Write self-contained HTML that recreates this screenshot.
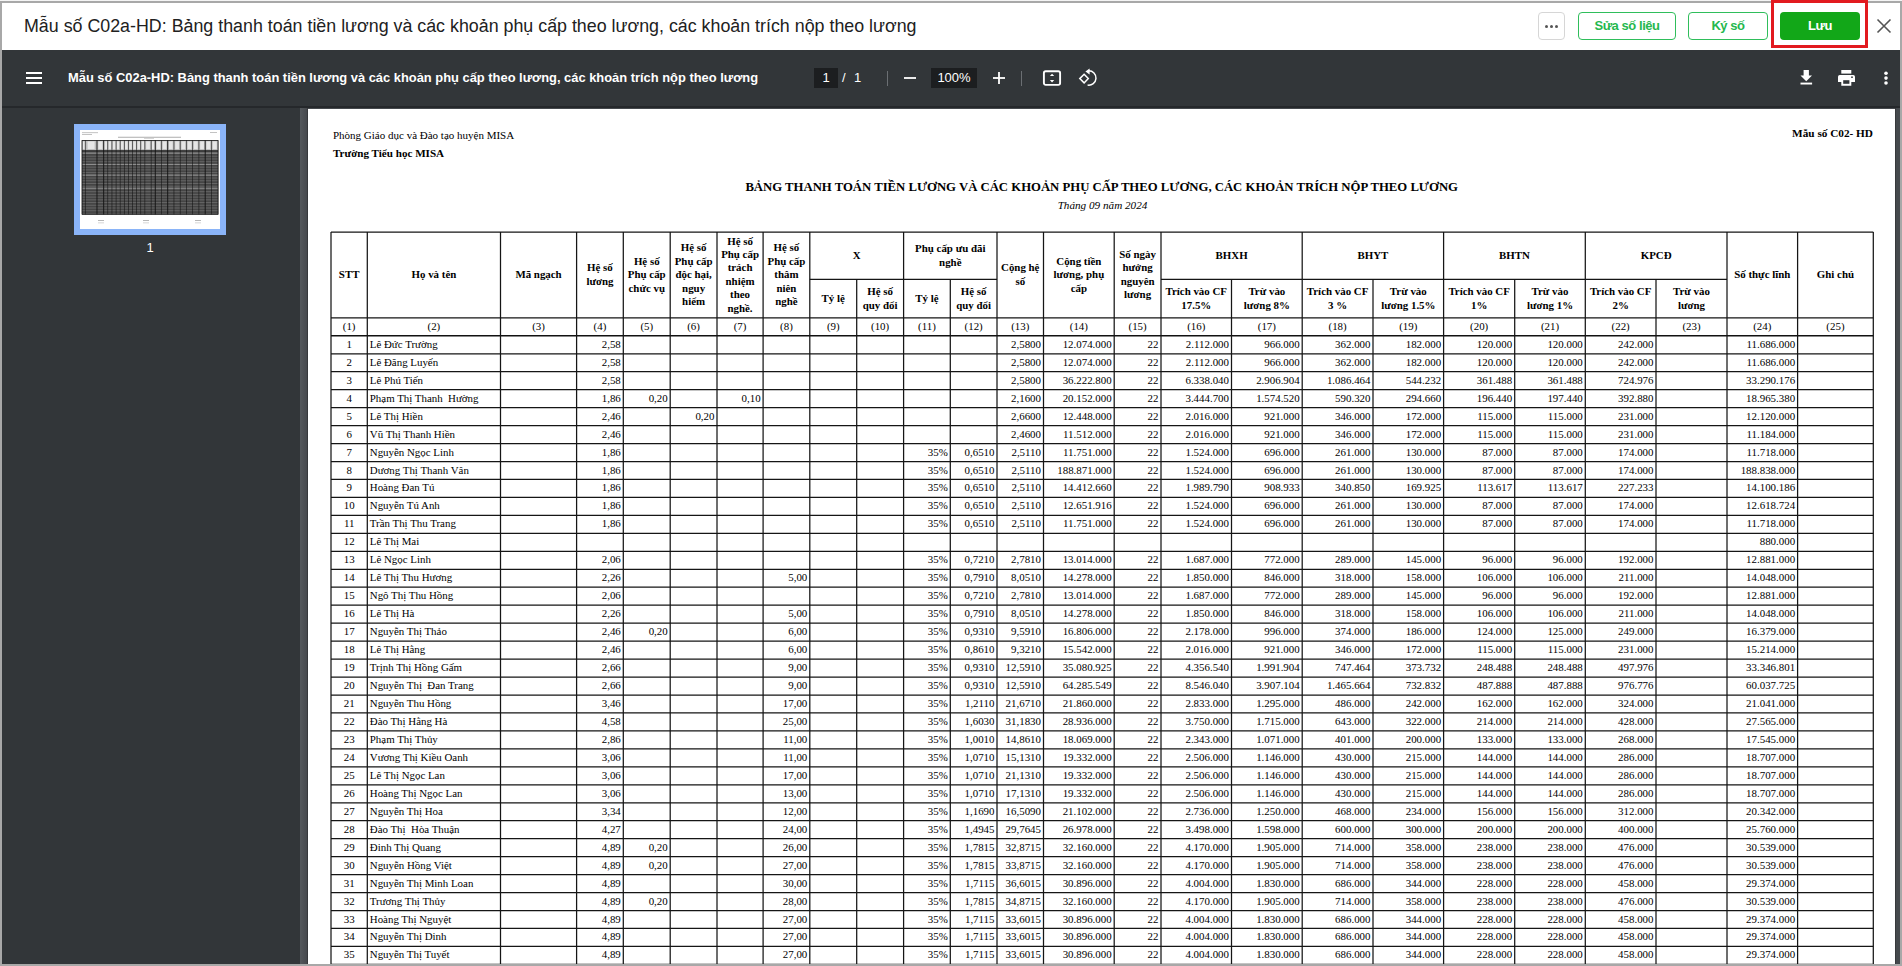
<!DOCTYPE html>
<html><head><meta charset="utf-8"><title>C02a-HD</title>
<style>
*{margin:0;padding:0;box-sizing:border-box}
html,body{width:1902px;height:966px;overflow:hidden;background:#a8a8a8;font-family:"Liberation Sans",sans-serif}
#frame{position:absolute;left:2px;top:3px;width:1898px;height:961px;background:#323639;overflow:hidden}
#topline{position:absolute;left:0;top:0;width:1902px;height:1px;background:#f4f4f4}
#hdr{position:absolute;left:2px;top:3px;width:1898px;height:47px;background:#fff}
#hdr .title{position:absolute;left:22px;top:13px;font-size:17.84px;color:#212121;white-space:nowrap;letter-spacing:0}
.btn{position:absolute;top:12px;height:28px;border-radius:4px;font-weight:bold;font-size:13px;letter-spacing:-0.45px;line-height:26px;text-align:center;white-space:nowrap}
.btn.more{left:1538px;width:27px;border:1px solid #d6d6d6;background:#fff}
.btn.more i{position:absolute;top:11.5px;width:3px;height:3px;border-radius:50%;background:#555}
.btn.ol{border:1px solid #2fbe5b;color:#25b84e;background:#fff}
.btn.fill{background:#12a718;color:#fff;line-height:28px}
#redbox{position:absolute;left:1771px;top:0;width:97px;height:48px;border:3px solid #e21a1f}
#closex{position:absolute;left:1876px;top:18px;width:16px;height:16px}
#tb{position:absolute;left:2px;top:50px;width:1898px;height:57px;background:#323639}
#tbshadow{position:absolute;left:2px;top:106px;width:1898px;height:2px;background:#25282b}
#tb .ttl{position:absolute;left:66px;top:20px;font-size:12.9px;font-weight:bold;color:#fff;white-space:nowrap}
#side{position:absolute;left:2px;top:108px;width:298px;height:856px;background:#323639}
#main{position:absolute;left:300px;top:108px;width:1600px;height:856px;background:#45494d}
#mainstrip{position:absolute;left:300px;top:108px;width:7px;height:856px;background:linear-gradient(to right,#54585c,#46494d)}
#page{position:absolute;left:308px;top:109px;width:1587px;height:855px;background:#fff;overflow:hidden}
#inner{position:absolute;left:-308px;top:-109px;width:1902px;height:966px;font-family:"Liberation Serif",serif;color:#000}
.grid{position:absolute;left:0;top:0}
.th{position:absolute;display:flex;align-items:center;justify-content:center;text-align:center;font-weight:bold;font-size:10.9px;line-height:13.4px}
.tn{position:absolute;height:18px;line-height:16px;text-align:center;font-size:10.9px}
.td{position:absolute;height:18px;line-height:16.6px;font-size:10.9px;white-space:nowrap;overflow:hidden}
.td.tc{text-align:center}
.td.tl{text-align:left;padding-left:2.5px}
.td.tr{text-align:right;padding-right:2.5px}
.ptxt{position:absolute;white-space:nowrap;font-size:10.67px}
.ico{position:absolute}
.pgbox{position:absolute;top:68px;height:20px;background:#1c1e20;color:#fff;font-size:13px;line-height:20px;text-align:center}
.tbt{position:absolute;top:68px;height:20px;color:#fff;font-size:13px;line-height:20px}
.sep{position:absolute;top:71px;width:1px;height:15px;background:#6b6f73}
#thumb{position:absolute;left:72px;top:16px;width:152px;height:111px;background:#8ab4f8}
#thpage{position:absolute;left:6px;top:6px;width:140px;height:99px;background:#fff}
#thtbl{position:absolute;left:2px;top:10px;width:137px;height:74px;background:repeating-linear-gradient(to bottom,#555 0,#555 1px,#8a8a8a 1px,#8a8a8a 2px)}
#thnum{position:absolute;left:138px;top:132px;width:20px;text-align:center;color:#fff;font-size:13px}

</style></head>
<body>
<div id="topline"></div>
<div id="hdr">
  <div class="title">Mẫu số C02a-HD: Bảng thanh toán tiền lương và các khoản phụ cấp theo lương, các khoản trích nộp theo lương</div>
</div>
<div class="btn more" style="top:12px"><i style="left:6px"></i><i style="left:11px"></i><i style="left:16px"></i></div>
<div class="btn ol" style="left:1578px;width:98px">Sửa số liệu</div>
<div class="btn ol" style="left:1688px;width:80px">Ký số</div>
<div id="redbox"></div>
<div class="btn fill" style="left:1780px;width:80px">Lưu</div>
<svg id="closex" viewBox="0 0 16 16"><path d="M1.5 1.5L14.5 14.5M14.5 1.5L1.5 14.5" stroke="#555" stroke-width="1.6" fill="none"/></svg>
<div id="tb">
  <div class="ttl">Mẫu số C02a-HD: Bảng thanh toán tiền lương và các khoản phụ cấp theo lương, các khoản trích nộp theo lương</div>
</div>
<svg class="ico" style="left:26px;top:72px" width="16" height="12" viewBox="0 0 16 12"><rect x="0" y="0" width="16" height="2" fill="#fff"/><rect x="0" y="5" width="16" height="2" fill="#fff"/><rect x="0" y="10" width="16" height="2" fill="#fff"/></svg>
<div class="pgbox" style="left:814px;width:24px">1</div>
<div class="tbt" style="left:842px">/</div>
<div class="tbt" style="left:854px">1</div>
<div class="sep" style="left:887px"></div>
<svg class="ico" style="left:904px;top:77px" width="12" height="2" viewBox="0 0 12 2"><rect y="0.1" width="12" height="1.8" fill="#fff"/></svg>
<div class="pgbox" style="left:931px;width:46px">100%</div>
<svg class="ico" style="left:993px;top:72px" width="12" height="12" viewBox="0 0 12 12"><rect x="5.1" y="0" width="1.8" height="12" fill="#fff"/><rect x="0" y="5.1" width="12" height="1.8" fill="#fff"/></svg>
<div class="sep" style="left:1021px"></div>
<svg class="ico" style="left:1042px;top:69px" width="20" height="18" viewBox="0 0 20 18"><rect x="1.9" y="2.2" width="16.2" height="13.7" rx="1.8" fill="none" stroke="#fff" stroke-width="1.9"/><path d="M7.9 7.1L10.05 4.7L12.2 7.1Z M7.9 11L10.05 13.4L12.2 11Z" fill="#fff"/></svg>
<svg class="ico" style="left:1076px;top:66px" width="24" height="24" viewBox="0 0 24 24"><path d="M12.6 4.8A7.2 7.2 0 1 1 11.6 19.1" fill="none" stroke="#fff" stroke-width="1.5"/><path d="M13.6 2.4L13.6 8.4L9.4 5.6Z" fill="#fff"/><path d="M8.1 8.3L12.3 12.6L8.1 16.9L3.8 12.6Z" fill="none" stroke="#fff" stroke-width="1.5"/></svg>
<svg class="ico" style="left:1800px;top:70px" width="13" height="16" viewBox="0 0 13 16"><path d="M3.6 0H8.9V5.4H12L6.25 11.2L0.5 5.4H3.6Z" fill="#fff"/><rect x="0.5" y="12.6" width="11.6" height="1.9" fill="#fff"/></svg>
<svg class="ico" style="left:1838px;top:70px" width="17" height="16" viewBox="0 0 17 16"><rect x="3.3" y="0" width="10" height="3.6" fill="#fff"/><path d="M1.8 5H15.2A1.8 1.8 0 0 1 17 6.8V12H13.3V15.8H3.3V12H0V6.8A1.8 1.8 0 0 1 1.8 5Z" fill="#fff"/><rect x="5.2" y="10.2" width="6.2" height="3.6" fill="#323639"/><circle cx="14" cy="7.2" r="0.9" fill="#323639"/></svg>
<svg class="ico" style="left:1883px;top:71px" width="6" height="15" viewBox="0 0 6 15"><circle cx="3" cy="2.2" r="1.8" fill="#fff"/><circle cx="3" cy="7.1" r="1.8" fill="#fff"/><circle cx="3" cy="12" r="1.8" fill="#fff"/></svg>
<div id="tbshadow"></div>
<div id="side">
  <div id="thumb"><div id="thpage"><svg width="140" height="99" viewBox="0 0 140 99" style="position:absolute;left:0;top:0"><rect x="2.03" y="10.2" width="136.06" height="10.70" fill="#bdbdbd"/><rect x="2.67" y="11.40" width="1.92" height="7.70" fill="#e6e6e6"/><rect x="7.58" y="11.40" width="7.05" height="7.70" fill="#e6e6e6"/><rect x="18.32" y="11.40" width="4.03" height="7.70" fill="#e6e6e6"/><rect x="24.52" y="11.40" width="2.47" height="7.70" fill="#e6e6e6"/><rect x="28.64" y="11.40" width="2.48" height="7.70" fill="#e6e6e6"/><rect x="32.78" y="11.40" width="2.48" height="7.70" fill="#e6e6e6"/><rect x="36.89" y="11.40" width="2.44" height="7.70" fill="#e6e6e6"/><rect x="40.97" y="11.40" width="2.47" height="7.70" fill="#e6e6e6"/><rect x="45.09" y="11.40" width="2.48" height="7.70" fill="#e6e6e6"/><rect x="49.23" y="11.40" width="2.48" height="7.70" fill="#e6e6e6"/><rect x="53.37" y="11.40" width="2.47" height="7.70" fill="#e6e6e6"/><rect x="57.49" y="11.40" width="2.47" height="7.70" fill="#e6e6e6"/><rect x="61.60" y="11.40" width="2.46" height="7.70" fill="#e6e6e6"/><rect x="66.13" y="11.40" width="3.74" height="7.70" fill="#e6e6e6"/><rect x="71.95" y="11.40" width="2.48" height="7.70" fill="#e6e6e6"/><rect x="76.49" y="11.40" width="3.73" height="7.70" fill="#e6e6e6"/><rect x="82.72" y="11.40" width="3.74" height="7.70" fill="#e6e6e6"/><rect x="88.95" y="11.40" width="3.75" height="7.70" fill="#e6e6e6"/><rect x="95.20" y="11.40" width="3.74" height="7.70" fill="#e6e6e6"/><rect x="101.43" y="11.40" width="3.76" height="7.70" fill="#e6e6e6"/><rect x="107.70" y="11.40" width="3.74" height="7.70" fill="#e6e6e6"/><rect x="113.93" y="11.40" width="3.74" height="7.70" fill="#e6e6e6"/><rect x="120.17" y="11.40" width="3.76" height="7.70" fill="#e6e6e6"/><rect x="126.43" y="11.40" width="3.74" height="7.70" fill="#e6e6e6"/><rect x="132.74" y="11.40" width="4.01" height="7.70" fill="#e6e6e6"/><rect x="2.03" y="20.9" width="136.06" height="63.60" fill="#666"/><rect x="2.03" y="22.40" width="136.06" height="0.6" fill="#3c3c3c"/><rect x="2.03" y="23.98" width="136.06" height="0.6" fill="#2e2e2e"/><rect x="2.03" y="25.56" width="136.06" height="0.6" fill="#2e2e2e"/><rect x="2.03" y="27.14" width="136.06" height="0.6" fill="#2e2e2e"/><rect x="2.03" y="28.72" width="136.06" height="0.6" fill="#2e2e2e"/><rect x="2.03" y="30.30" width="136.06" height="0.6" fill="#2e2e2e"/><rect x="2.03" y="31.88" width="136.06" height="0.6" fill="#2e2e2e"/><rect x="2.03" y="33.46" width="136.06" height="0.6" fill="#2e2e2e"/><rect x="2.03" y="35.04" width="136.06" height="0.6" fill="#2e2e2e"/><rect x="2.03" y="36.62" width="136.06" height="0.6" fill="#2e2e2e"/><rect x="2.03" y="38.20" width="136.06" height="0.6" fill="#2e2e2e"/><rect x="2.03" y="39.78" width="136.06" height="0.6" fill="#2e2e2e"/><rect x="2.03" y="41.36" width="136.06" height="0.6" fill="#2e2e2e"/><rect x="2.03" y="42.94" width="136.06" height="0.6" fill="#2e2e2e"/><rect x="2.03" y="44.52" width="136.06" height="0.6" fill="#2e2e2e"/><rect x="2.03" y="46.10" width="136.06" height="0.6" fill="#2e2e2e"/><rect x="2.03" y="47.68" width="136.06" height="0.6" fill="#2e2e2e"/><rect x="2.03" y="49.26" width="136.06" height="0.6" fill="#2e2e2e"/><rect x="2.03" y="50.84" width="136.06" height="0.6" fill="#2e2e2e"/><rect x="2.03" y="52.42" width="136.06" height="0.6" fill="#2e2e2e"/><rect x="2.03" y="54.00" width="136.06" height="0.6" fill="#2e2e2e"/><rect x="2.03" y="55.58" width="136.06" height="0.6" fill="#2e2e2e"/><rect x="2.03" y="57.16" width="136.06" height="0.6" fill="#2e2e2e"/><rect x="2.03" y="58.74" width="136.06" height="0.6" fill="#2e2e2e"/><rect x="2.03" y="60.32" width="136.06" height="0.6" fill="#2e2e2e"/><rect x="2.03" y="61.90" width="136.06" height="0.6" fill="#2e2e2e"/><rect x="2.03" y="63.48" width="136.06" height="0.6" fill="#2e2e2e"/><rect x="2.03" y="65.06" width="136.06" height="0.6" fill="#2e2e2e"/><rect x="2.03" y="66.64" width="136.06" height="0.6" fill="#2e2e2e"/><rect x="2.03" y="68.22" width="136.06" height="0.6" fill="#2e2e2e"/><rect x="2.03" y="69.80" width="136.06" height="0.6" fill="#2e2e2e"/><rect x="2.03" y="71.38" width="136.06" height="0.6" fill="#2e2e2e"/><rect x="2.03" y="72.96" width="136.06" height="0.6" fill="#2e2e2e"/><rect x="2.03" y="74.54" width="136.06" height="0.6" fill="#2e2e2e"/><rect x="2.03" y="76.12" width="136.06" height="0.6" fill="#2e2e2e"/><rect x="2.03" y="77.70" width="136.06" height="0.6" fill="#2e2e2e"/><rect x="2.03" y="79.28" width="136.06" height="0.6" fill="#2e2e2e"/><rect x="2.03" y="80.86" width="136.06" height="0.6" fill="#2e2e2e"/><rect x="2.03" y="82.44" width="136.06" height="0.6" fill="#2e2e2e"/><rect x="2.03" y="84.02" width="136.06" height="0.6" fill="#2e2e2e"/><rect x="2.03" y="22.6" width="136.06" height="0.9" fill="#9a9a9a"/><rect x="2.03" y="33.9" width="136.06" height="0.9" fill="#9a9a9a"/><rect x="2.03" y="44.6" width="136.06" height="0.9" fill="#9a9a9a"/><rect x="2.03" y="57.7" width="136.06" height="0.9" fill="#9a9a9a"/><rect x="1.58" y="10.2" width="0.9" height="74.30" fill="#111"/><rect x="4.96" y="10.2" width="0.55" height="74.30" fill="#111"/><rect x="16.53" y="10.2" width="0.9" height="74.30" fill="#111"/><rect x="23.25" y="10.2" width="0.9" height="74.30" fill="#111"/><rect x="27.54" y="10.2" width="0.55" height="74.30" fill="#111"/><rect x="31.68" y="10.2" width="0.55" height="74.30" fill="#111"/><rect x="35.81" y="10.2" width="0.55" height="74.30" fill="#111"/><rect x="39.87" y="10.2" width="0.55" height="74.30" fill="#111"/><rect x="43.99" y="10.2" width="0.55" height="74.30" fill="#111"/><rect x="48.13" y="10.2" width="0.55" height="74.30" fill="#111"/><rect x="52.27" y="10.2" width="0.55" height="74.30" fill="#111"/><rect x="56.39" y="10.2" width="0.55" height="74.30" fill="#111"/><rect x="60.51" y="10.2" width="0.55" height="74.30" fill="#111"/><rect x="64.61" y="10.2" width="0.55" height="74.30" fill="#111"/><rect x="70.85" y="10.2" width="0.55" height="74.30" fill="#111"/><rect x="74.80" y="10.2" width="0.9" height="74.30" fill="#111"/><rect x="81.19" y="10.2" width="0.55" height="74.30" fill="#111"/><rect x="87.26" y="10.2" width="0.9" height="74.30" fill="#111"/><rect x="93.68" y="10.2" width="0.55" height="74.30" fill="#111"/><rect x="99.90" y="10.2" width="0.55" height="74.30" fill="#111"/><rect x="106.18" y="10.2" width="0.55" height="74.30" fill="#111"/><rect x="112.40" y="10.2" width="0.55" height="74.30" fill="#111"/><rect x="118.64" y="10.2" width="0.55" height="74.30" fill="#111"/><rect x="124.73" y="10.2" width="0.9" height="74.30" fill="#111"/><rect x="131.13" y="10.2" width="0.55" height="74.30" fill="#111"/><rect x="137.64" y="10.2" width="0.9" height="74.30" fill="#111"/><rect x="2.03" y="10.2" width="136.06" height="0.8" fill="#111"/><rect x="2.03" y="20.30" width="136.06" height="1.2" fill="#111"/><rect x="2.03" y="83.70" width="136.06" height="0.8" fill="#222"/><rect x="2" y="2.4" width="16" height="0.7" fill="#aaa"/><rect x="2" y="4.0" width="10" height="0.7" fill="#aaa"/><rect x="130" y="2.2" width="7" height="0.7" fill="#aaa"/><rect x="38" y="6.8" width="63" height="0.8" fill="#999"/><rect x="64" y="8.2" width="10" height="0.6" fill="#bbb"/><rect x="18" y="90.3" width="6" height="0.7" fill="#999"/><rect x="18" y="92.6" width="6" height="0.6" fill="#bbb"/><rect x="63" y="90.3" width="6" height="0.7" fill="#999"/><rect x="63" y="92.6" width="6" height="0.6" fill="#bbb"/><rect x="115" y="90.3" width="6" height="0.7" fill="#999"/><rect x="115" y="92.6" width="6" height="0.6" fill="#bbb"/></svg></div></div>
  <div id="thnum">1</div>
</div>
<div id="main"></div>
<div id="mainstrip"></div>
<div style="position:absolute;left:307px;top:108px;width:1px;height:856px;background:#36383b"></div>
<div style="position:absolute;left:1895px;top:108px;width:1px;height:856px;background:#36383b"></div>

<div id="page"><div id="inner">
<svg class="grid" width="1902" height="966" viewBox="0 0 1902 966"><line x1="331" y1="232.0" x2="1873.3" y2="232.0" stroke="#151515" stroke-width="1.25"/><line x1="809.8" y1="279.4" x2="903.6" y2="279.4" stroke="#151515" stroke-width="1.25"/><line x1="903.6" y1="279.4" x2="997" y2="279.4" stroke="#151515" stroke-width="1.25"/><line x1="1161" y1="279.4" x2="1302.2" y2="279.4" stroke="#151515" stroke-width="1.25"/><line x1="1302.2" y1="279.4" x2="1443.6" y2="279.4" stroke="#151515" stroke-width="1.25"/><line x1="1443.6" y1="279.4" x2="1585.3" y2="279.4" stroke="#151515" stroke-width="1.25"/><line x1="1585.3" y1="279.4" x2="1727" y2="279.4" stroke="#151515" stroke-width="1.25"/><line x1="331" y1="317.8" x2="1873.3" y2="317.8" stroke="#151515" stroke-width="1.25"/><line x1="331" y1="335.8" x2="1873.3" y2="335.8" stroke="#111" stroke-width="1.6"/><line x1="331" y1="353.76" x2="1873.3" y2="353.76" stroke="#151515" stroke-width="1.25"/><line x1="331" y1="371.72" x2="1873.3" y2="371.72" stroke="#151515" stroke-width="1.25"/><line x1="331" y1="389.68" x2="1873.3" y2="389.68" stroke="#151515" stroke-width="1.25"/><line x1="331" y1="407.64" x2="1873.3" y2="407.64" stroke="#151515" stroke-width="1.25"/><line x1="331" y1="425.6" x2="1873.3" y2="425.6" stroke="#151515" stroke-width="1.25"/><line x1="331" y1="443.56" x2="1873.3" y2="443.56" stroke="#151515" stroke-width="1.25"/><line x1="331" y1="461.52" x2="1873.3" y2="461.52" stroke="#151515" stroke-width="1.25"/><line x1="331" y1="479.48" x2="1873.3" y2="479.48" stroke="#151515" stroke-width="1.25"/><line x1="331" y1="497.44000000000005" x2="1873.3" y2="497.44000000000005" stroke="#151515" stroke-width="1.25"/><line x1="331" y1="515.4000000000001" x2="1873.3" y2="515.4000000000001" stroke="#151515" stroke-width="1.25"/><line x1="331" y1="533.36" x2="1873.3" y2="533.36" stroke="#151515" stroke-width="1.25"/><line x1="331" y1="551.32" x2="1873.3" y2="551.32" stroke="#151515" stroke-width="1.25"/><line x1="331" y1="569.28" x2="1873.3" y2="569.28" stroke="#151515" stroke-width="1.25"/><line x1="331" y1="587.24" x2="1873.3" y2="587.24" stroke="#151515" stroke-width="1.25"/><line x1="331" y1="605.2" x2="1873.3" y2="605.2" stroke="#151515" stroke-width="1.25"/><line x1="331" y1="623.1600000000001" x2="1873.3" y2="623.1600000000001" stroke="#151515" stroke-width="1.25"/><line x1="331" y1="641.12" x2="1873.3" y2="641.12" stroke="#151515" stroke-width="1.25"/><line x1="331" y1="659.08" x2="1873.3" y2="659.08" stroke="#151515" stroke-width="1.25"/><line x1="331" y1="677.04" x2="1873.3" y2="677.04" stroke="#151515" stroke-width="1.25"/><line x1="331" y1="695.0" x2="1873.3" y2="695.0" stroke="#151515" stroke-width="1.25"/><line x1="331" y1="712.96" x2="1873.3" y2="712.96" stroke="#151515" stroke-width="1.25"/><line x1="331" y1="730.9200000000001" x2="1873.3" y2="730.9200000000001" stroke="#151515" stroke-width="1.25"/><line x1="331" y1="748.8800000000001" x2="1873.3" y2="748.8800000000001" stroke="#151515" stroke-width="1.25"/><line x1="331" y1="766.84" x2="1873.3" y2="766.84" stroke="#151515" stroke-width="1.25"/><line x1="331" y1="784.8" x2="1873.3" y2="784.8" stroke="#151515" stroke-width="1.25"/><line x1="331" y1="802.76" x2="1873.3" y2="802.76" stroke="#151515" stroke-width="1.25"/><line x1="331" y1="820.72" x2="1873.3" y2="820.72" stroke="#151515" stroke-width="1.25"/><line x1="331" y1="838.6800000000001" x2="1873.3" y2="838.6800000000001" stroke="#151515" stroke-width="1.25"/><line x1="331" y1="856.6400000000001" x2="1873.3" y2="856.6400000000001" stroke="#151515" stroke-width="1.25"/><line x1="331" y1="874.6000000000001" x2="1873.3" y2="874.6000000000001" stroke="#151515" stroke-width="1.25"/><line x1="331" y1="892.56" x2="1873.3" y2="892.56" stroke="#151515" stroke-width="1.25"/><line x1="331" y1="910.52" x2="1873.3" y2="910.52" stroke="#151515" stroke-width="1.25"/><line x1="331" y1="928.48" x2="1873.3" y2="928.48" stroke="#151515" stroke-width="1.25"/><line x1="331" y1="946.44" x2="1873.3" y2="946.44" stroke="#151515" stroke-width="1.25"/><line x1="331" y1="964.4000000000001" x2="1873.3" y2="964.4000000000001" stroke="#151515" stroke-width="1.25"/><line x1="331" y1="232.0" x2="331" y2="966" stroke="#151515" stroke-width="1.25"/><line x1="367.3" y1="232.0" x2="367.3" y2="966" stroke="#151515" stroke-width="1.25"/><line x1="500.5" y1="232.0" x2="500.5" y2="966" stroke="#151515" stroke-width="1.25"/><line x1="576.6" y1="232.0" x2="576.6" y2="966" stroke="#151515" stroke-width="1.25"/><line x1="623.3" y1="232.0" x2="623.3" y2="966" stroke="#151515" stroke-width="1.25"/><line x1="670.2" y1="232.0" x2="670.2" y2="966" stroke="#151515" stroke-width="1.25"/><line x1="717" y1="232.0" x2="717" y2="966" stroke="#151515" stroke-width="1.25"/><line x1="763.1" y1="232.0" x2="763.1" y2="966" stroke="#151515" stroke-width="1.25"/><line x1="809.8" y1="232.0" x2="809.8" y2="966" stroke="#151515" stroke-width="1.25"/><line x1="856.7" y1="279.4" x2="856.7" y2="966" stroke="#151515" stroke-width="1.25"/><line x1="903.6" y1="232.0" x2="903.6" y2="966" stroke="#151515" stroke-width="1.25"/><line x1="950.3" y1="279.4" x2="950.3" y2="966" stroke="#151515" stroke-width="1.25"/><line x1="997" y1="232.0" x2="997" y2="966" stroke="#151515" stroke-width="1.25"/><line x1="1043.5" y1="232.0" x2="1043.5" y2="966" stroke="#151515" stroke-width="1.25"/><line x1="1114.2" y1="232.0" x2="1114.2" y2="966" stroke="#151515" stroke-width="1.25"/><line x1="1161" y1="232.0" x2="1161" y2="966" stroke="#151515" stroke-width="1.25"/><line x1="1231.5" y1="279.4" x2="1231.5" y2="966" stroke="#151515" stroke-width="1.25"/><line x1="1302.2" y1="232.0" x2="1302.2" y2="966" stroke="#151515" stroke-width="1.25"/><line x1="1373" y1="279.4" x2="1373" y2="966" stroke="#151515" stroke-width="1.25"/><line x1="1443.6" y1="232.0" x2="1443.6" y2="966" stroke="#151515" stroke-width="1.25"/><line x1="1514.7" y1="279.4" x2="1514.7" y2="966" stroke="#151515" stroke-width="1.25"/><line x1="1585.3" y1="232.0" x2="1585.3" y2="966" stroke="#151515" stroke-width="1.25"/><line x1="1656" y1="279.4" x2="1656" y2="966" stroke="#151515" stroke-width="1.25"/><line x1="1727" y1="232.0" x2="1727" y2="966" stroke="#151515" stroke-width="1.25"/><line x1="1797.6" y1="232.0" x2="1797.6" y2="966" stroke="#151515" stroke-width="1.25"/><line x1="1873.3" y1="232.0" x2="1873.3" y2="966" stroke="#151515" stroke-width="1.25"/></svg>
<div class="th" style="left:331.0px;top:232.0px;width:36.3px;height:85.8px"><span>STT</span></div>
<div class="th" style="left:367.3px;top:232.0px;width:133.2px;height:85.8px"><span>Họ và tên</span></div>
<div class="th" style="left:500.5px;top:232.0px;width:76.1px;height:85.8px"><span>Mã ngạch</span></div>
<div class="th" style="left:576.6px;top:232.0px;width:46.7px;height:85.8px"><span>Hệ số<br>lương</span></div>
<div class="th" style="left:623.3px;top:232.0px;width:46.9px;height:85.8px"><span>Hệ số<br>Phụ cấp<br>chức vụ</span></div>
<div class="th" style="left:670.2px;top:232.0px;width:46.8px;height:85.8px"><span>Hệ số<br>Phụ cấp<br>độc hại,<br>nguy<br>hiểm</span></div>
<div class="th" style="left:717.0px;top:232.0px;width:46.1px;height:85.8px"><span>Hệ số<br>Phụ cấp<br>trách<br>nhiệm<br>theo<br>nghề.</span></div>
<div class="th" style="left:763.1px;top:232.0px;width:46.7px;height:85.8px"><span>Hệ số<br>Phụ cấp<br>thâm<br>niên<br>nghề</span></div>
<div class="th" style="left:997.0px;top:232.0px;width:46.5px;height:85.8px"><span>Cộng hệ<br>số</span></div>
<div class="th" style="left:1043.5px;top:232.0px;width:70.7px;height:85.8px"><span>Cộng tiền<br>lương, phụ<br>cấp</span></div>
<div class="th" style="left:1114.2px;top:232.0px;width:46.8px;height:85.8px"><span>Số ngày<br>hưởng<br>nguyên<br>lương</span></div>
<div class="th" style="left:1727.0px;top:232.0px;width:70.6px;height:85.8px"><span>Số thực lĩnh</span></div>
<div class="th" style="left:1797.6px;top:232.0px;width:75.7px;height:85.8px"><span>Ghi chú</span></div>
<div class="th" style="left:809.8px;top:232.0px;width:93.8px;height:47.4px"><span>X</span></div>
<div class="th" style="left:903.6px;top:232.0px;width:93.4px;height:47.4px"><span>Phụ cấp ưu đãi<br>nghề</span></div>
<div class="th" style="left:1161.0px;top:232.0px;width:141.2px;height:47.4px"><span>BHXH</span></div>
<div class="th" style="left:1302.2px;top:232.0px;width:141.4px;height:47.4px"><span>BHYT</span></div>
<div class="th" style="left:1443.6px;top:232.0px;width:141.7px;height:47.4px"><span>BHTN</span></div>
<div class="th" style="left:1585.3px;top:232.0px;width:141.7px;height:47.4px"><span>KPCĐ</span></div>
<div class="th" style="left:809.8px;top:279.4px;width:46.9px;height:38.4px"><span>Tỷ lệ</span></div>
<div class="th" style="left:856.7px;top:279.4px;width:46.9px;height:38.4px"><span>Hệ số<br>quy đổi</span></div>
<div class="th" style="left:903.6px;top:279.4px;width:46.7px;height:38.4px"><span>Tỷ lệ</span></div>
<div class="th" style="left:950.3px;top:279.4px;width:46.7px;height:38.4px"><span>Hệ số<br>quy đổi</span></div>
<div class="th" style="left:1161.0px;top:279.4px;width:70.5px;height:38.4px"><span>Trích vào CF<br>17.5%</span></div>
<div class="th" style="left:1231.5px;top:279.4px;width:70.7px;height:38.4px"><span>Trừ vào<br>lương 8%</span></div>
<div class="th" style="left:1302.2px;top:279.4px;width:70.8px;height:38.4px"><span>Trích vào CF<br>3 %</span></div>
<div class="th" style="left:1373.0px;top:279.4px;width:70.6px;height:38.4px"><span>Trừ vào<br>lương 1.5%</span></div>
<div class="th" style="left:1443.6px;top:279.4px;width:71.1px;height:38.4px"><span>Trích vào CF<br>1%</span></div>
<div class="th" style="left:1514.7px;top:279.4px;width:70.6px;height:38.4px"><span>Trừ vào<br>lương 1%</span></div>
<div class="th" style="left:1585.3px;top:279.4px;width:70.7px;height:38.4px"><span>Trích vào CF<br>2%</span></div>
<div class="th" style="left:1656.0px;top:279.4px;width:71.0px;height:38.4px"><span>Trừ vào<br>lương</span></div>
<div class="tn" style="left:331.0px;top:317.8px;width:36.3px">(1)</div>
<div class="tn" style="left:367.3px;top:317.8px;width:133.2px">(2)</div>
<div class="tn" style="left:500.5px;top:317.8px;width:76.1px">(3)</div>
<div class="tn" style="left:576.6px;top:317.8px;width:46.7px">(4)</div>
<div class="tn" style="left:623.3px;top:317.8px;width:46.9px">(5)</div>
<div class="tn" style="left:670.2px;top:317.8px;width:46.8px">(6)</div>
<div class="tn" style="left:717.0px;top:317.8px;width:46.1px">(7)</div>
<div class="tn" style="left:763.1px;top:317.8px;width:46.7px">(8)</div>
<div class="tn" style="left:809.8px;top:317.8px;width:46.9px">(9)</div>
<div class="tn" style="left:856.7px;top:317.8px;width:46.9px">(10)</div>
<div class="tn" style="left:903.6px;top:317.8px;width:46.7px">(11)</div>
<div class="tn" style="left:950.3px;top:317.8px;width:46.7px">(12)</div>
<div class="tn" style="left:997.0px;top:317.8px;width:46.5px">(13)</div>
<div class="tn" style="left:1043.5px;top:317.8px;width:70.7px">(14)</div>
<div class="tn" style="left:1114.2px;top:317.8px;width:46.8px">(15)</div>
<div class="tn" style="left:1161.0px;top:317.8px;width:70.5px">(16)</div>
<div class="tn" style="left:1231.5px;top:317.8px;width:70.7px">(17)</div>
<div class="tn" style="left:1302.2px;top:317.8px;width:70.8px">(18)</div>
<div class="tn" style="left:1373.0px;top:317.8px;width:70.6px">(19)</div>
<div class="tn" style="left:1443.6px;top:317.8px;width:71.1px">(20)</div>
<div class="tn" style="left:1514.7px;top:317.8px;width:70.6px">(21)</div>
<div class="tn" style="left:1585.3px;top:317.8px;width:70.7px">(22)</div>
<div class="tn" style="left:1656.0px;top:317.8px;width:71.0px">(23)</div>
<div class="tn" style="left:1727.0px;top:317.8px;width:70.6px">(24)</div>
<div class="tn" style="left:1797.6px;top:317.8px;width:75.7px">(25)</div>
<div class="td tc" style="left:331.0px;top:335.80px;width:36.3px">1</div>
<div class="td tl" style="left:367.3px;top:335.80px;width:133.2px">Lê Đức Trường</div>
<div class="td tr" style="left:576.6px;top:335.80px;width:46.7px">2,58</div>
<div class="td tr" style="left:997.0px;top:335.80px;width:46.5px">2,5800</div>
<div class="td tr" style="left:1043.5px;top:335.80px;width:70.7px">12.074.000</div>
<div class="td tr" style="left:1114.2px;top:335.80px;width:46.8px">22</div>
<div class="td tr" style="left:1161.0px;top:335.80px;width:70.5px">2.112.000</div>
<div class="td tr" style="left:1231.5px;top:335.80px;width:70.7px">966.000</div>
<div class="td tr" style="left:1302.2px;top:335.80px;width:70.8px">362.000</div>
<div class="td tr" style="left:1373.0px;top:335.80px;width:70.6px">182.000</div>
<div class="td tr" style="left:1443.6px;top:335.80px;width:71.1px">120.000</div>
<div class="td tr" style="left:1514.7px;top:335.80px;width:70.6px">120.000</div>
<div class="td tr" style="left:1585.3px;top:335.80px;width:70.7px">242.000</div>
<div class="td tr" style="left:1727.0px;top:335.80px;width:70.6px">11.686.000</div>
<div class="td tc" style="left:331.0px;top:353.76px;width:36.3px">2</div>
<div class="td tl" style="left:367.3px;top:353.76px;width:133.2px">Lê Đăng Luyến</div>
<div class="td tr" style="left:576.6px;top:353.76px;width:46.7px">2,58</div>
<div class="td tr" style="left:997.0px;top:353.76px;width:46.5px">2,5800</div>
<div class="td tr" style="left:1043.5px;top:353.76px;width:70.7px">12.074.000</div>
<div class="td tr" style="left:1114.2px;top:353.76px;width:46.8px">22</div>
<div class="td tr" style="left:1161.0px;top:353.76px;width:70.5px">2.112.000</div>
<div class="td tr" style="left:1231.5px;top:353.76px;width:70.7px">966.000</div>
<div class="td tr" style="left:1302.2px;top:353.76px;width:70.8px">362.000</div>
<div class="td tr" style="left:1373.0px;top:353.76px;width:70.6px">182.000</div>
<div class="td tr" style="left:1443.6px;top:353.76px;width:71.1px">120.000</div>
<div class="td tr" style="left:1514.7px;top:353.76px;width:70.6px">120.000</div>
<div class="td tr" style="left:1585.3px;top:353.76px;width:70.7px">242.000</div>
<div class="td tr" style="left:1727.0px;top:353.76px;width:70.6px">11.686.000</div>
<div class="td tc" style="left:331.0px;top:371.72px;width:36.3px">3</div>
<div class="td tl" style="left:367.3px;top:371.72px;width:133.2px">Lê Phú Tiến</div>
<div class="td tr" style="left:576.6px;top:371.72px;width:46.7px">2,58</div>
<div class="td tr" style="left:997.0px;top:371.72px;width:46.5px">2,5800</div>
<div class="td tr" style="left:1043.5px;top:371.72px;width:70.7px">36.222.800</div>
<div class="td tr" style="left:1114.2px;top:371.72px;width:46.8px">22</div>
<div class="td tr" style="left:1161.0px;top:371.72px;width:70.5px">6.338.040</div>
<div class="td tr" style="left:1231.5px;top:371.72px;width:70.7px">2.906.904</div>
<div class="td tr" style="left:1302.2px;top:371.72px;width:70.8px">1.086.464</div>
<div class="td tr" style="left:1373.0px;top:371.72px;width:70.6px">544.232</div>
<div class="td tr" style="left:1443.6px;top:371.72px;width:71.1px">361.488</div>
<div class="td tr" style="left:1514.7px;top:371.72px;width:70.6px">361.488</div>
<div class="td tr" style="left:1585.3px;top:371.72px;width:70.7px">724.976</div>
<div class="td tr" style="left:1727.0px;top:371.72px;width:70.6px">33.290.176</div>
<div class="td tc" style="left:331.0px;top:389.68px;width:36.3px">4</div>
<div class="td tl" style="left:367.3px;top:389.68px;width:133.2px">Phạm Thị Thanh&nbsp; Hường</div>
<div class="td tr" style="left:576.6px;top:389.68px;width:46.7px">1,86</div>
<div class="td tr" style="left:623.3px;top:389.68px;width:46.9px">0,20</div>
<div class="td tr" style="left:717.0px;top:389.68px;width:46.1px">0,10</div>
<div class="td tr" style="left:997.0px;top:389.68px;width:46.5px">2,1600</div>
<div class="td tr" style="left:1043.5px;top:389.68px;width:70.7px">20.152.000</div>
<div class="td tr" style="left:1114.2px;top:389.68px;width:46.8px">22</div>
<div class="td tr" style="left:1161.0px;top:389.68px;width:70.5px">3.444.700</div>
<div class="td tr" style="left:1231.5px;top:389.68px;width:70.7px">1.574.520</div>
<div class="td tr" style="left:1302.2px;top:389.68px;width:70.8px">590.320</div>
<div class="td tr" style="left:1373.0px;top:389.68px;width:70.6px">294.660</div>
<div class="td tr" style="left:1443.6px;top:389.68px;width:71.1px">196.440</div>
<div class="td tr" style="left:1514.7px;top:389.68px;width:70.6px">197.440</div>
<div class="td tr" style="left:1585.3px;top:389.68px;width:70.7px">392.880</div>
<div class="td tr" style="left:1727.0px;top:389.68px;width:70.6px">18.965.380</div>
<div class="td tc" style="left:331.0px;top:407.64px;width:36.3px">5</div>
<div class="td tl" style="left:367.3px;top:407.64px;width:133.2px">Lê Thị Hiền</div>
<div class="td tr" style="left:576.6px;top:407.64px;width:46.7px">2,46</div>
<div class="td tr" style="left:670.2px;top:407.64px;width:46.8px">0,20</div>
<div class="td tr" style="left:997.0px;top:407.64px;width:46.5px">2,6600</div>
<div class="td tr" style="left:1043.5px;top:407.64px;width:70.7px">12.448.000</div>
<div class="td tr" style="left:1114.2px;top:407.64px;width:46.8px">22</div>
<div class="td tr" style="left:1161.0px;top:407.64px;width:70.5px">2.016.000</div>
<div class="td tr" style="left:1231.5px;top:407.64px;width:70.7px">921.000</div>
<div class="td tr" style="left:1302.2px;top:407.64px;width:70.8px">346.000</div>
<div class="td tr" style="left:1373.0px;top:407.64px;width:70.6px">172.000</div>
<div class="td tr" style="left:1443.6px;top:407.64px;width:71.1px">115.000</div>
<div class="td tr" style="left:1514.7px;top:407.64px;width:70.6px">115.000</div>
<div class="td tr" style="left:1585.3px;top:407.64px;width:70.7px">231.000</div>
<div class="td tr" style="left:1727.0px;top:407.64px;width:70.6px">12.120.000</div>
<div class="td tc" style="left:331.0px;top:425.60px;width:36.3px">6</div>
<div class="td tl" style="left:367.3px;top:425.60px;width:133.2px">Vũ Thị Thanh Hiền</div>
<div class="td tr" style="left:576.6px;top:425.60px;width:46.7px">2,46</div>
<div class="td tr" style="left:997.0px;top:425.60px;width:46.5px">2,4600</div>
<div class="td tr" style="left:1043.5px;top:425.60px;width:70.7px">11.512.000</div>
<div class="td tr" style="left:1114.2px;top:425.60px;width:46.8px">22</div>
<div class="td tr" style="left:1161.0px;top:425.60px;width:70.5px">2.016.000</div>
<div class="td tr" style="left:1231.5px;top:425.60px;width:70.7px">921.000</div>
<div class="td tr" style="left:1302.2px;top:425.60px;width:70.8px">346.000</div>
<div class="td tr" style="left:1373.0px;top:425.60px;width:70.6px">172.000</div>
<div class="td tr" style="left:1443.6px;top:425.60px;width:71.1px">115.000</div>
<div class="td tr" style="left:1514.7px;top:425.60px;width:70.6px">115.000</div>
<div class="td tr" style="left:1585.3px;top:425.60px;width:70.7px">231.000</div>
<div class="td tr" style="left:1727.0px;top:425.60px;width:70.6px">11.184.000</div>
<div class="td tc" style="left:331.0px;top:443.56px;width:36.3px">7</div>
<div class="td tl" style="left:367.3px;top:443.56px;width:133.2px">Nguyễn Ngọc Linh</div>
<div class="td tr" style="left:576.6px;top:443.56px;width:46.7px">1,86</div>
<div class="td tr" style="left:903.6px;top:443.56px;width:46.7px">35%</div>
<div class="td tr" style="left:950.3px;top:443.56px;width:46.7px">0,6510</div>
<div class="td tr" style="left:997.0px;top:443.56px;width:46.5px">2,5110</div>
<div class="td tr" style="left:1043.5px;top:443.56px;width:70.7px">11.751.000</div>
<div class="td tr" style="left:1114.2px;top:443.56px;width:46.8px">22</div>
<div class="td tr" style="left:1161.0px;top:443.56px;width:70.5px">1.524.000</div>
<div class="td tr" style="left:1231.5px;top:443.56px;width:70.7px">696.000</div>
<div class="td tr" style="left:1302.2px;top:443.56px;width:70.8px">261.000</div>
<div class="td tr" style="left:1373.0px;top:443.56px;width:70.6px">130.000</div>
<div class="td tr" style="left:1443.6px;top:443.56px;width:71.1px">87.000</div>
<div class="td tr" style="left:1514.7px;top:443.56px;width:70.6px">87.000</div>
<div class="td tr" style="left:1585.3px;top:443.56px;width:70.7px">174.000</div>
<div class="td tr" style="left:1727.0px;top:443.56px;width:70.6px">11.718.000</div>
<div class="td tc" style="left:331.0px;top:461.52px;width:36.3px">8</div>
<div class="td tl" style="left:367.3px;top:461.52px;width:133.2px">Dương Thị Thanh Vân</div>
<div class="td tr" style="left:576.6px;top:461.52px;width:46.7px">1,86</div>
<div class="td tr" style="left:903.6px;top:461.52px;width:46.7px">35%</div>
<div class="td tr" style="left:950.3px;top:461.52px;width:46.7px">0,6510</div>
<div class="td tr" style="left:997.0px;top:461.52px;width:46.5px">2,5110</div>
<div class="td tr" style="left:1043.5px;top:461.52px;width:70.7px">188.871.000</div>
<div class="td tr" style="left:1114.2px;top:461.52px;width:46.8px">22</div>
<div class="td tr" style="left:1161.0px;top:461.52px;width:70.5px">1.524.000</div>
<div class="td tr" style="left:1231.5px;top:461.52px;width:70.7px">696.000</div>
<div class="td tr" style="left:1302.2px;top:461.52px;width:70.8px">261.000</div>
<div class="td tr" style="left:1373.0px;top:461.52px;width:70.6px">130.000</div>
<div class="td tr" style="left:1443.6px;top:461.52px;width:71.1px">87.000</div>
<div class="td tr" style="left:1514.7px;top:461.52px;width:70.6px">87.000</div>
<div class="td tr" style="left:1585.3px;top:461.52px;width:70.7px">174.000</div>
<div class="td tr" style="left:1727.0px;top:461.52px;width:70.6px">188.838.000</div>
<div class="td tc" style="left:331.0px;top:479.48px;width:36.3px">9</div>
<div class="td tl" style="left:367.3px;top:479.48px;width:133.2px">Hoàng Đan Tú</div>
<div class="td tr" style="left:576.6px;top:479.48px;width:46.7px">1,86</div>
<div class="td tr" style="left:903.6px;top:479.48px;width:46.7px">35%</div>
<div class="td tr" style="left:950.3px;top:479.48px;width:46.7px">0,6510</div>
<div class="td tr" style="left:997.0px;top:479.48px;width:46.5px">2,5110</div>
<div class="td tr" style="left:1043.5px;top:479.48px;width:70.7px">14.412.660</div>
<div class="td tr" style="left:1114.2px;top:479.48px;width:46.8px">22</div>
<div class="td tr" style="left:1161.0px;top:479.48px;width:70.5px">1.989.790</div>
<div class="td tr" style="left:1231.5px;top:479.48px;width:70.7px">908.933</div>
<div class="td tr" style="left:1302.2px;top:479.48px;width:70.8px">340.850</div>
<div class="td tr" style="left:1373.0px;top:479.48px;width:70.6px">169.925</div>
<div class="td tr" style="left:1443.6px;top:479.48px;width:71.1px">113.617</div>
<div class="td tr" style="left:1514.7px;top:479.48px;width:70.6px">113.617</div>
<div class="td tr" style="left:1585.3px;top:479.48px;width:70.7px">227.233</div>
<div class="td tr" style="left:1727.0px;top:479.48px;width:70.6px">14.100.186</div>
<div class="td tc" style="left:331.0px;top:497.44px;width:36.3px">10</div>
<div class="td tl" style="left:367.3px;top:497.44px;width:133.2px">Nguyễn Tú Anh</div>
<div class="td tr" style="left:576.6px;top:497.44px;width:46.7px">1,86</div>
<div class="td tr" style="left:903.6px;top:497.44px;width:46.7px">35%</div>
<div class="td tr" style="left:950.3px;top:497.44px;width:46.7px">0,6510</div>
<div class="td tr" style="left:997.0px;top:497.44px;width:46.5px">2,5110</div>
<div class="td tr" style="left:1043.5px;top:497.44px;width:70.7px">12.651.916</div>
<div class="td tr" style="left:1114.2px;top:497.44px;width:46.8px">22</div>
<div class="td tr" style="left:1161.0px;top:497.44px;width:70.5px">1.524.000</div>
<div class="td tr" style="left:1231.5px;top:497.44px;width:70.7px">696.000</div>
<div class="td tr" style="left:1302.2px;top:497.44px;width:70.8px">261.000</div>
<div class="td tr" style="left:1373.0px;top:497.44px;width:70.6px">130.000</div>
<div class="td tr" style="left:1443.6px;top:497.44px;width:71.1px">87.000</div>
<div class="td tr" style="left:1514.7px;top:497.44px;width:70.6px">87.000</div>
<div class="td tr" style="left:1585.3px;top:497.44px;width:70.7px">174.000</div>
<div class="td tr" style="left:1727.0px;top:497.44px;width:70.6px">12.618.724</div>
<div class="td tc" style="left:331.0px;top:515.40px;width:36.3px">11</div>
<div class="td tl" style="left:367.3px;top:515.40px;width:133.2px">Trần Thị Thu Trang</div>
<div class="td tr" style="left:576.6px;top:515.40px;width:46.7px">1,86</div>
<div class="td tr" style="left:903.6px;top:515.40px;width:46.7px">35%</div>
<div class="td tr" style="left:950.3px;top:515.40px;width:46.7px">0,6510</div>
<div class="td tr" style="left:997.0px;top:515.40px;width:46.5px">2,5110</div>
<div class="td tr" style="left:1043.5px;top:515.40px;width:70.7px">11.751.000</div>
<div class="td tr" style="left:1114.2px;top:515.40px;width:46.8px">22</div>
<div class="td tr" style="left:1161.0px;top:515.40px;width:70.5px">1.524.000</div>
<div class="td tr" style="left:1231.5px;top:515.40px;width:70.7px">696.000</div>
<div class="td tr" style="left:1302.2px;top:515.40px;width:70.8px">261.000</div>
<div class="td tr" style="left:1373.0px;top:515.40px;width:70.6px">130.000</div>
<div class="td tr" style="left:1443.6px;top:515.40px;width:71.1px">87.000</div>
<div class="td tr" style="left:1514.7px;top:515.40px;width:70.6px">87.000</div>
<div class="td tr" style="left:1585.3px;top:515.40px;width:70.7px">174.000</div>
<div class="td tr" style="left:1727.0px;top:515.40px;width:70.6px">11.718.000</div>
<div class="td tc" style="left:331.0px;top:533.36px;width:36.3px">12</div>
<div class="td tl" style="left:367.3px;top:533.36px;width:133.2px">Lê Thị Mai</div>
<div class="td tr" style="left:1727.0px;top:533.36px;width:70.6px">880.000</div>
<div class="td tc" style="left:331.0px;top:551.32px;width:36.3px">13</div>
<div class="td tl" style="left:367.3px;top:551.32px;width:133.2px">Lê Ngọc Linh</div>
<div class="td tr" style="left:576.6px;top:551.32px;width:46.7px">2,06</div>
<div class="td tr" style="left:903.6px;top:551.32px;width:46.7px">35%</div>
<div class="td tr" style="left:950.3px;top:551.32px;width:46.7px">0,7210</div>
<div class="td tr" style="left:997.0px;top:551.32px;width:46.5px">2,7810</div>
<div class="td tr" style="left:1043.5px;top:551.32px;width:70.7px">13.014.000</div>
<div class="td tr" style="left:1114.2px;top:551.32px;width:46.8px">22</div>
<div class="td tr" style="left:1161.0px;top:551.32px;width:70.5px">1.687.000</div>
<div class="td tr" style="left:1231.5px;top:551.32px;width:70.7px">772.000</div>
<div class="td tr" style="left:1302.2px;top:551.32px;width:70.8px">289.000</div>
<div class="td tr" style="left:1373.0px;top:551.32px;width:70.6px">145.000</div>
<div class="td tr" style="left:1443.6px;top:551.32px;width:71.1px">96.000</div>
<div class="td tr" style="left:1514.7px;top:551.32px;width:70.6px">96.000</div>
<div class="td tr" style="left:1585.3px;top:551.32px;width:70.7px">192.000</div>
<div class="td tr" style="left:1727.0px;top:551.32px;width:70.6px">12.881.000</div>
<div class="td tc" style="left:331.0px;top:569.28px;width:36.3px">14</div>
<div class="td tl" style="left:367.3px;top:569.28px;width:133.2px">Lê Thị Thu Hương</div>
<div class="td tr" style="left:576.6px;top:569.28px;width:46.7px">2,26</div>
<div class="td tr" style="left:763.1px;top:569.28px;width:46.7px">5,00</div>
<div class="td tr" style="left:903.6px;top:569.28px;width:46.7px">35%</div>
<div class="td tr" style="left:950.3px;top:569.28px;width:46.7px">0,7910</div>
<div class="td tr" style="left:997.0px;top:569.28px;width:46.5px">8,0510</div>
<div class="td tr" style="left:1043.5px;top:569.28px;width:70.7px">14.278.000</div>
<div class="td tr" style="left:1114.2px;top:569.28px;width:46.8px">22</div>
<div class="td tr" style="left:1161.0px;top:569.28px;width:70.5px">1.850.000</div>
<div class="td tr" style="left:1231.5px;top:569.28px;width:70.7px">846.000</div>
<div class="td tr" style="left:1302.2px;top:569.28px;width:70.8px">318.000</div>
<div class="td tr" style="left:1373.0px;top:569.28px;width:70.6px">158.000</div>
<div class="td tr" style="left:1443.6px;top:569.28px;width:71.1px">106.000</div>
<div class="td tr" style="left:1514.7px;top:569.28px;width:70.6px">106.000</div>
<div class="td tr" style="left:1585.3px;top:569.28px;width:70.7px">211.000</div>
<div class="td tr" style="left:1727.0px;top:569.28px;width:70.6px">14.048.000</div>
<div class="td tc" style="left:331.0px;top:587.24px;width:36.3px">15</div>
<div class="td tl" style="left:367.3px;top:587.24px;width:133.2px">Ngô Thị Thu Hồng</div>
<div class="td tr" style="left:576.6px;top:587.24px;width:46.7px">2,06</div>
<div class="td tr" style="left:903.6px;top:587.24px;width:46.7px">35%</div>
<div class="td tr" style="left:950.3px;top:587.24px;width:46.7px">0,7210</div>
<div class="td tr" style="left:997.0px;top:587.24px;width:46.5px">2,7810</div>
<div class="td tr" style="left:1043.5px;top:587.24px;width:70.7px">13.014.000</div>
<div class="td tr" style="left:1114.2px;top:587.24px;width:46.8px">22</div>
<div class="td tr" style="left:1161.0px;top:587.24px;width:70.5px">1.687.000</div>
<div class="td tr" style="left:1231.5px;top:587.24px;width:70.7px">772.000</div>
<div class="td tr" style="left:1302.2px;top:587.24px;width:70.8px">289.000</div>
<div class="td tr" style="left:1373.0px;top:587.24px;width:70.6px">145.000</div>
<div class="td tr" style="left:1443.6px;top:587.24px;width:71.1px">96.000</div>
<div class="td tr" style="left:1514.7px;top:587.24px;width:70.6px">96.000</div>
<div class="td tr" style="left:1585.3px;top:587.24px;width:70.7px">192.000</div>
<div class="td tr" style="left:1727.0px;top:587.24px;width:70.6px">12.881.000</div>
<div class="td tc" style="left:331.0px;top:605.20px;width:36.3px">16</div>
<div class="td tl" style="left:367.3px;top:605.20px;width:133.2px">Lê Thị Hà</div>
<div class="td tr" style="left:576.6px;top:605.20px;width:46.7px">2,26</div>
<div class="td tr" style="left:763.1px;top:605.20px;width:46.7px">5,00</div>
<div class="td tr" style="left:903.6px;top:605.20px;width:46.7px">35%</div>
<div class="td tr" style="left:950.3px;top:605.20px;width:46.7px">0,7910</div>
<div class="td tr" style="left:997.0px;top:605.20px;width:46.5px">8,0510</div>
<div class="td tr" style="left:1043.5px;top:605.20px;width:70.7px">14.278.000</div>
<div class="td tr" style="left:1114.2px;top:605.20px;width:46.8px">22</div>
<div class="td tr" style="left:1161.0px;top:605.20px;width:70.5px">1.850.000</div>
<div class="td tr" style="left:1231.5px;top:605.20px;width:70.7px">846.000</div>
<div class="td tr" style="left:1302.2px;top:605.20px;width:70.8px">318.000</div>
<div class="td tr" style="left:1373.0px;top:605.20px;width:70.6px">158.000</div>
<div class="td tr" style="left:1443.6px;top:605.20px;width:71.1px">106.000</div>
<div class="td tr" style="left:1514.7px;top:605.20px;width:70.6px">106.000</div>
<div class="td tr" style="left:1585.3px;top:605.20px;width:70.7px">211.000</div>
<div class="td tr" style="left:1727.0px;top:605.20px;width:70.6px">14.048.000</div>
<div class="td tc" style="left:331.0px;top:623.16px;width:36.3px">17</div>
<div class="td tl" style="left:367.3px;top:623.16px;width:133.2px">Nguyễn Thị Thảo</div>
<div class="td tr" style="left:576.6px;top:623.16px;width:46.7px">2,46</div>
<div class="td tr" style="left:623.3px;top:623.16px;width:46.9px">0,20</div>
<div class="td tr" style="left:763.1px;top:623.16px;width:46.7px">6,00</div>
<div class="td tr" style="left:903.6px;top:623.16px;width:46.7px">35%</div>
<div class="td tr" style="left:950.3px;top:623.16px;width:46.7px">0,9310</div>
<div class="td tr" style="left:997.0px;top:623.16px;width:46.5px">9,5910</div>
<div class="td tr" style="left:1043.5px;top:623.16px;width:70.7px">16.806.000</div>
<div class="td tr" style="left:1114.2px;top:623.16px;width:46.8px">22</div>
<div class="td tr" style="left:1161.0px;top:623.16px;width:70.5px">2.178.000</div>
<div class="td tr" style="left:1231.5px;top:623.16px;width:70.7px">996.000</div>
<div class="td tr" style="left:1302.2px;top:623.16px;width:70.8px">374.000</div>
<div class="td tr" style="left:1373.0px;top:623.16px;width:70.6px">186.000</div>
<div class="td tr" style="left:1443.6px;top:623.16px;width:71.1px">124.000</div>
<div class="td tr" style="left:1514.7px;top:623.16px;width:70.6px">125.000</div>
<div class="td tr" style="left:1585.3px;top:623.16px;width:70.7px">249.000</div>
<div class="td tr" style="left:1727.0px;top:623.16px;width:70.6px">16.379.000</div>
<div class="td tc" style="left:331.0px;top:641.12px;width:36.3px">18</div>
<div class="td tl" style="left:367.3px;top:641.12px;width:133.2px">Lê Thị Hằng</div>
<div class="td tr" style="left:576.6px;top:641.12px;width:46.7px">2,46</div>
<div class="td tr" style="left:763.1px;top:641.12px;width:46.7px">6,00</div>
<div class="td tr" style="left:903.6px;top:641.12px;width:46.7px">35%</div>
<div class="td tr" style="left:950.3px;top:641.12px;width:46.7px">0,8610</div>
<div class="td tr" style="left:997.0px;top:641.12px;width:46.5px">9,3210</div>
<div class="td tr" style="left:1043.5px;top:641.12px;width:70.7px">15.542.000</div>
<div class="td tr" style="left:1114.2px;top:641.12px;width:46.8px">22</div>
<div class="td tr" style="left:1161.0px;top:641.12px;width:70.5px">2.016.000</div>
<div class="td tr" style="left:1231.5px;top:641.12px;width:70.7px">921.000</div>
<div class="td tr" style="left:1302.2px;top:641.12px;width:70.8px">346.000</div>
<div class="td tr" style="left:1373.0px;top:641.12px;width:70.6px">172.000</div>
<div class="td tr" style="left:1443.6px;top:641.12px;width:71.1px">115.000</div>
<div class="td tr" style="left:1514.7px;top:641.12px;width:70.6px">115.000</div>
<div class="td tr" style="left:1585.3px;top:641.12px;width:70.7px">231.000</div>
<div class="td tr" style="left:1727.0px;top:641.12px;width:70.6px">15.214.000</div>
<div class="td tc" style="left:331.0px;top:659.08px;width:36.3px">19</div>
<div class="td tl" style="left:367.3px;top:659.08px;width:133.2px">Trịnh Thị Hồng Gấm</div>
<div class="td tr" style="left:576.6px;top:659.08px;width:46.7px">2,66</div>
<div class="td tr" style="left:763.1px;top:659.08px;width:46.7px">9,00</div>
<div class="td tr" style="left:903.6px;top:659.08px;width:46.7px">35%</div>
<div class="td tr" style="left:950.3px;top:659.08px;width:46.7px">0,9310</div>
<div class="td tr" style="left:997.0px;top:659.08px;width:46.5px">12,5910</div>
<div class="td tr" style="left:1043.5px;top:659.08px;width:70.7px">35.080.925</div>
<div class="td tr" style="left:1114.2px;top:659.08px;width:46.8px">22</div>
<div class="td tr" style="left:1161.0px;top:659.08px;width:70.5px">4.356.540</div>
<div class="td tr" style="left:1231.5px;top:659.08px;width:70.7px">1.991.904</div>
<div class="td tr" style="left:1302.2px;top:659.08px;width:70.8px">747.464</div>
<div class="td tr" style="left:1373.0px;top:659.08px;width:70.6px">373.732</div>
<div class="td tr" style="left:1443.6px;top:659.08px;width:71.1px">248.488</div>
<div class="td tr" style="left:1514.7px;top:659.08px;width:70.6px">248.488</div>
<div class="td tr" style="left:1585.3px;top:659.08px;width:70.7px">497.976</div>
<div class="td tr" style="left:1727.0px;top:659.08px;width:70.6px">33.346.801</div>
<div class="td tc" style="left:331.0px;top:677.04px;width:36.3px">20</div>
<div class="td tl" style="left:367.3px;top:677.04px;width:133.2px">Nguyễn Thị&nbsp; Đan Trang</div>
<div class="td tr" style="left:576.6px;top:677.04px;width:46.7px">2,66</div>
<div class="td tr" style="left:763.1px;top:677.04px;width:46.7px">9,00</div>
<div class="td tr" style="left:903.6px;top:677.04px;width:46.7px">35%</div>
<div class="td tr" style="left:950.3px;top:677.04px;width:46.7px">0,9310</div>
<div class="td tr" style="left:997.0px;top:677.04px;width:46.5px">12,5910</div>
<div class="td tr" style="left:1043.5px;top:677.04px;width:70.7px">64.285.549</div>
<div class="td tr" style="left:1114.2px;top:677.04px;width:46.8px">22</div>
<div class="td tr" style="left:1161.0px;top:677.04px;width:70.5px">8.546.040</div>
<div class="td tr" style="left:1231.5px;top:677.04px;width:70.7px">3.907.104</div>
<div class="td tr" style="left:1302.2px;top:677.04px;width:70.8px">1.465.664</div>
<div class="td tr" style="left:1373.0px;top:677.04px;width:70.6px">732.832</div>
<div class="td tr" style="left:1443.6px;top:677.04px;width:71.1px">487.888</div>
<div class="td tr" style="left:1514.7px;top:677.04px;width:70.6px">487.888</div>
<div class="td tr" style="left:1585.3px;top:677.04px;width:70.7px">976.776</div>
<div class="td tr" style="left:1727.0px;top:677.04px;width:70.6px">60.037.725</div>
<div class="td tc" style="left:331.0px;top:695.00px;width:36.3px">21</div>
<div class="td tl" style="left:367.3px;top:695.00px;width:133.2px">Nguyễn Thu Hồng</div>
<div class="td tr" style="left:576.6px;top:695.00px;width:46.7px">3,46</div>
<div class="td tr" style="left:763.1px;top:695.00px;width:46.7px">17,00</div>
<div class="td tr" style="left:903.6px;top:695.00px;width:46.7px">35%</div>
<div class="td tr" style="left:950.3px;top:695.00px;width:46.7px">1,2110</div>
<div class="td tr" style="left:997.0px;top:695.00px;width:46.5px">21,6710</div>
<div class="td tr" style="left:1043.5px;top:695.00px;width:70.7px">21.860.000</div>
<div class="td tr" style="left:1114.2px;top:695.00px;width:46.8px">22</div>
<div class="td tr" style="left:1161.0px;top:695.00px;width:70.5px">2.833.000</div>
<div class="td tr" style="left:1231.5px;top:695.00px;width:70.7px">1.295.000</div>
<div class="td tr" style="left:1302.2px;top:695.00px;width:70.8px">486.000</div>
<div class="td tr" style="left:1373.0px;top:695.00px;width:70.6px">242.000</div>
<div class="td tr" style="left:1443.6px;top:695.00px;width:71.1px">162.000</div>
<div class="td tr" style="left:1514.7px;top:695.00px;width:70.6px">162.000</div>
<div class="td tr" style="left:1585.3px;top:695.00px;width:70.7px">324.000</div>
<div class="td tr" style="left:1727.0px;top:695.00px;width:70.6px">21.041.000</div>
<div class="td tc" style="left:331.0px;top:712.96px;width:36.3px">22</div>
<div class="td tl" style="left:367.3px;top:712.96px;width:133.2px">Đào Thị Hằng Hà</div>
<div class="td tr" style="left:576.6px;top:712.96px;width:46.7px">4,58</div>
<div class="td tr" style="left:763.1px;top:712.96px;width:46.7px">25,00</div>
<div class="td tr" style="left:903.6px;top:712.96px;width:46.7px">35%</div>
<div class="td tr" style="left:950.3px;top:712.96px;width:46.7px">1,6030</div>
<div class="td tr" style="left:997.0px;top:712.96px;width:46.5px">31,1830</div>
<div class="td tr" style="left:1043.5px;top:712.96px;width:70.7px">28.936.000</div>
<div class="td tr" style="left:1114.2px;top:712.96px;width:46.8px">22</div>
<div class="td tr" style="left:1161.0px;top:712.96px;width:70.5px">3.750.000</div>
<div class="td tr" style="left:1231.5px;top:712.96px;width:70.7px">1.715.000</div>
<div class="td tr" style="left:1302.2px;top:712.96px;width:70.8px">643.000</div>
<div class="td tr" style="left:1373.0px;top:712.96px;width:70.6px">322.000</div>
<div class="td tr" style="left:1443.6px;top:712.96px;width:71.1px">214.000</div>
<div class="td tr" style="left:1514.7px;top:712.96px;width:70.6px">214.000</div>
<div class="td tr" style="left:1585.3px;top:712.96px;width:70.7px">428.000</div>
<div class="td tr" style="left:1727.0px;top:712.96px;width:70.6px">27.565.000</div>
<div class="td tc" style="left:331.0px;top:730.92px;width:36.3px">23</div>
<div class="td tl" style="left:367.3px;top:730.92px;width:133.2px">Phạm Thị Thủy</div>
<div class="td tr" style="left:576.6px;top:730.92px;width:46.7px">2,86</div>
<div class="td tr" style="left:763.1px;top:730.92px;width:46.7px">11,00</div>
<div class="td tr" style="left:903.6px;top:730.92px;width:46.7px">35%</div>
<div class="td tr" style="left:950.3px;top:730.92px;width:46.7px">1,0010</div>
<div class="td tr" style="left:997.0px;top:730.92px;width:46.5px">14,8610</div>
<div class="td tr" style="left:1043.5px;top:730.92px;width:70.7px">18.069.000</div>
<div class="td tr" style="left:1114.2px;top:730.92px;width:46.8px">22</div>
<div class="td tr" style="left:1161.0px;top:730.92px;width:70.5px">2.343.000</div>
<div class="td tr" style="left:1231.5px;top:730.92px;width:70.7px">1.071.000</div>
<div class="td tr" style="left:1302.2px;top:730.92px;width:70.8px">401.000</div>
<div class="td tr" style="left:1373.0px;top:730.92px;width:70.6px">200.000</div>
<div class="td tr" style="left:1443.6px;top:730.92px;width:71.1px">133.000</div>
<div class="td tr" style="left:1514.7px;top:730.92px;width:70.6px">133.000</div>
<div class="td tr" style="left:1585.3px;top:730.92px;width:70.7px">268.000</div>
<div class="td tr" style="left:1727.0px;top:730.92px;width:70.6px">17.545.000</div>
<div class="td tc" style="left:331.0px;top:748.88px;width:36.3px">24</div>
<div class="td tl" style="left:367.3px;top:748.88px;width:133.2px">Vương Thị Kiều Oanh</div>
<div class="td tr" style="left:576.6px;top:748.88px;width:46.7px">3,06</div>
<div class="td tr" style="left:763.1px;top:748.88px;width:46.7px">11,00</div>
<div class="td tr" style="left:903.6px;top:748.88px;width:46.7px">35%</div>
<div class="td tr" style="left:950.3px;top:748.88px;width:46.7px">1,0710</div>
<div class="td tr" style="left:997.0px;top:748.88px;width:46.5px">15,1310</div>
<div class="td tr" style="left:1043.5px;top:748.88px;width:70.7px">19.332.000</div>
<div class="td tr" style="left:1114.2px;top:748.88px;width:46.8px">22</div>
<div class="td tr" style="left:1161.0px;top:748.88px;width:70.5px">2.506.000</div>
<div class="td tr" style="left:1231.5px;top:748.88px;width:70.7px">1.146.000</div>
<div class="td tr" style="left:1302.2px;top:748.88px;width:70.8px">430.000</div>
<div class="td tr" style="left:1373.0px;top:748.88px;width:70.6px">215.000</div>
<div class="td tr" style="left:1443.6px;top:748.88px;width:71.1px">144.000</div>
<div class="td tr" style="left:1514.7px;top:748.88px;width:70.6px">144.000</div>
<div class="td tr" style="left:1585.3px;top:748.88px;width:70.7px">286.000</div>
<div class="td tr" style="left:1727.0px;top:748.88px;width:70.6px">18.707.000</div>
<div class="td tc" style="left:331.0px;top:766.84px;width:36.3px">25</div>
<div class="td tl" style="left:367.3px;top:766.84px;width:133.2px">Lê Thị Ngọc Lan</div>
<div class="td tr" style="left:576.6px;top:766.84px;width:46.7px">3,06</div>
<div class="td tr" style="left:763.1px;top:766.84px;width:46.7px">17,00</div>
<div class="td tr" style="left:903.6px;top:766.84px;width:46.7px">35%</div>
<div class="td tr" style="left:950.3px;top:766.84px;width:46.7px">1,0710</div>
<div class="td tr" style="left:997.0px;top:766.84px;width:46.5px">21,1310</div>
<div class="td tr" style="left:1043.5px;top:766.84px;width:70.7px">19.332.000</div>
<div class="td tr" style="left:1114.2px;top:766.84px;width:46.8px">22</div>
<div class="td tr" style="left:1161.0px;top:766.84px;width:70.5px">2.506.000</div>
<div class="td tr" style="left:1231.5px;top:766.84px;width:70.7px">1.146.000</div>
<div class="td tr" style="left:1302.2px;top:766.84px;width:70.8px">430.000</div>
<div class="td tr" style="left:1373.0px;top:766.84px;width:70.6px">215.000</div>
<div class="td tr" style="left:1443.6px;top:766.84px;width:71.1px">144.000</div>
<div class="td tr" style="left:1514.7px;top:766.84px;width:70.6px">144.000</div>
<div class="td tr" style="left:1585.3px;top:766.84px;width:70.7px">286.000</div>
<div class="td tr" style="left:1727.0px;top:766.84px;width:70.6px">18.707.000</div>
<div class="td tc" style="left:331.0px;top:784.80px;width:36.3px">26</div>
<div class="td tl" style="left:367.3px;top:784.80px;width:133.2px">Hoàng Thị Ngọc Lan</div>
<div class="td tr" style="left:576.6px;top:784.80px;width:46.7px">3,06</div>
<div class="td tr" style="left:763.1px;top:784.80px;width:46.7px">13,00</div>
<div class="td tr" style="left:903.6px;top:784.80px;width:46.7px">35%</div>
<div class="td tr" style="left:950.3px;top:784.80px;width:46.7px">1,0710</div>
<div class="td tr" style="left:997.0px;top:784.80px;width:46.5px">17,1310</div>
<div class="td tr" style="left:1043.5px;top:784.80px;width:70.7px">19.332.000</div>
<div class="td tr" style="left:1114.2px;top:784.80px;width:46.8px">22</div>
<div class="td tr" style="left:1161.0px;top:784.80px;width:70.5px">2.506.000</div>
<div class="td tr" style="left:1231.5px;top:784.80px;width:70.7px">1.146.000</div>
<div class="td tr" style="left:1302.2px;top:784.80px;width:70.8px">430.000</div>
<div class="td tr" style="left:1373.0px;top:784.80px;width:70.6px">215.000</div>
<div class="td tr" style="left:1443.6px;top:784.80px;width:71.1px">144.000</div>
<div class="td tr" style="left:1514.7px;top:784.80px;width:70.6px">144.000</div>
<div class="td tr" style="left:1585.3px;top:784.80px;width:70.7px">286.000</div>
<div class="td tr" style="left:1727.0px;top:784.80px;width:70.6px">18.707.000</div>
<div class="td tc" style="left:331.0px;top:802.76px;width:36.3px">27</div>
<div class="td tl" style="left:367.3px;top:802.76px;width:133.2px">Nguyễn Thị Hoa</div>
<div class="td tr" style="left:576.6px;top:802.76px;width:46.7px">3,34</div>
<div class="td tr" style="left:763.1px;top:802.76px;width:46.7px">12,00</div>
<div class="td tr" style="left:903.6px;top:802.76px;width:46.7px">35%</div>
<div class="td tr" style="left:950.3px;top:802.76px;width:46.7px">1,1690</div>
<div class="td tr" style="left:997.0px;top:802.76px;width:46.5px">16,5090</div>
<div class="td tr" style="left:1043.5px;top:802.76px;width:70.7px">21.102.000</div>
<div class="td tr" style="left:1114.2px;top:802.76px;width:46.8px">22</div>
<div class="td tr" style="left:1161.0px;top:802.76px;width:70.5px">2.736.000</div>
<div class="td tr" style="left:1231.5px;top:802.76px;width:70.7px">1.250.000</div>
<div class="td tr" style="left:1302.2px;top:802.76px;width:70.8px">468.000</div>
<div class="td tr" style="left:1373.0px;top:802.76px;width:70.6px">234.000</div>
<div class="td tr" style="left:1443.6px;top:802.76px;width:71.1px">156.000</div>
<div class="td tr" style="left:1514.7px;top:802.76px;width:70.6px">156.000</div>
<div class="td tr" style="left:1585.3px;top:802.76px;width:70.7px">312.000</div>
<div class="td tr" style="left:1727.0px;top:802.76px;width:70.6px">20.342.000</div>
<div class="td tc" style="left:331.0px;top:820.72px;width:36.3px">28</div>
<div class="td tl" style="left:367.3px;top:820.72px;width:133.2px">Đào Thị&nbsp; Hòa Thuận</div>
<div class="td tr" style="left:576.6px;top:820.72px;width:46.7px">4,27</div>
<div class="td tr" style="left:763.1px;top:820.72px;width:46.7px">24,00</div>
<div class="td tr" style="left:903.6px;top:820.72px;width:46.7px">35%</div>
<div class="td tr" style="left:950.3px;top:820.72px;width:46.7px">1,4945</div>
<div class="td tr" style="left:997.0px;top:820.72px;width:46.5px">29,7645</div>
<div class="td tr" style="left:1043.5px;top:820.72px;width:70.7px">26.978.000</div>
<div class="td tr" style="left:1114.2px;top:820.72px;width:46.8px">22</div>
<div class="td tr" style="left:1161.0px;top:820.72px;width:70.5px">3.498.000</div>
<div class="td tr" style="left:1231.5px;top:820.72px;width:70.7px">1.598.000</div>
<div class="td tr" style="left:1302.2px;top:820.72px;width:70.8px">600.000</div>
<div class="td tr" style="left:1373.0px;top:820.72px;width:70.6px">300.000</div>
<div class="td tr" style="left:1443.6px;top:820.72px;width:71.1px">200.000</div>
<div class="td tr" style="left:1514.7px;top:820.72px;width:70.6px">200.000</div>
<div class="td tr" style="left:1585.3px;top:820.72px;width:70.7px">400.000</div>
<div class="td tr" style="left:1727.0px;top:820.72px;width:70.6px">25.760.000</div>
<div class="td tc" style="left:331.0px;top:838.68px;width:36.3px">29</div>
<div class="td tl" style="left:367.3px;top:838.68px;width:133.2px">Đinh Thị Quang</div>
<div class="td tr" style="left:576.6px;top:838.68px;width:46.7px">4,89</div>
<div class="td tr" style="left:623.3px;top:838.68px;width:46.9px">0,20</div>
<div class="td tr" style="left:763.1px;top:838.68px;width:46.7px">26,00</div>
<div class="td tr" style="left:903.6px;top:838.68px;width:46.7px">35%</div>
<div class="td tr" style="left:950.3px;top:838.68px;width:46.7px">1,7815</div>
<div class="td tr" style="left:997.0px;top:838.68px;width:46.5px">32,8715</div>
<div class="td tr" style="left:1043.5px;top:838.68px;width:70.7px">32.160.000</div>
<div class="td tr" style="left:1114.2px;top:838.68px;width:46.8px">22</div>
<div class="td tr" style="left:1161.0px;top:838.68px;width:70.5px">4.170.000</div>
<div class="td tr" style="left:1231.5px;top:838.68px;width:70.7px">1.905.000</div>
<div class="td tr" style="left:1302.2px;top:838.68px;width:70.8px">714.000</div>
<div class="td tr" style="left:1373.0px;top:838.68px;width:70.6px">358.000</div>
<div class="td tr" style="left:1443.6px;top:838.68px;width:71.1px">238.000</div>
<div class="td tr" style="left:1514.7px;top:838.68px;width:70.6px">238.000</div>
<div class="td tr" style="left:1585.3px;top:838.68px;width:70.7px">476.000</div>
<div class="td tr" style="left:1727.0px;top:838.68px;width:70.6px">30.539.000</div>
<div class="td tc" style="left:331.0px;top:856.64px;width:36.3px">30</div>
<div class="td tl" style="left:367.3px;top:856.64px;width:133.2px">Nguyễn Hồng Việt</div>
<div class="td tr" style="left:576.6px;top:856.64px;width:46.7px">4,89</div>
<div class="td tr" style="left:623.3px;top:856.64px;width:46.9px">0,20</div>
<div class="td tr" style="left:763.1px;top:856.64px;width:46.7px">27,00</div>
<div class="td tr" style="left:903.6px;top:856.64px;width:46.7px">35%</div>
<div class="td tr" style="left:950.3px;top:856.64px;width:46.7px">1,7815</div>
<div class="td tr" style="left:997.0px;top:856.64px;width:46.5px">33,8715</div>
<div class="td tr" style="left:1043.5px;top:856.64px;width:70.7px">32.160.000</div>
<div class="td tr" style="left:1114.2px;top:856.64px;width:46.8px">22</div>
<div class="td tr" style="left:1161.0px;top:856.64px;width:70.5px">4.170.000</div>
<div class="td tr" style="left:1231.5px;top:856.64px;width:70.7px">1.905.000</div>
<div class="td tr" style="left:1302.2px;top:856.64px;width:70.8px">714.000</div>
<div class="td tr" style="left:1373.0px;top:856.64px;width:70.6px">358.000</div>
<div class="td tr" style="left:1443.6px;top:856.64px;width:71.1px">238.000</div>
<div class="td tr" style="left:1514.7px;top:856.64px;width:70.6px">238.000</div>
<div class="td tr" style="left:1585.3px;top:856.64px;width:70.7px">476.000</div>
<div class="td tr" style="left:1727.0px;top:856.64px;width:70.6px">30.539.000</div>
<div class="td tc" style="left:331.0px;top:874.60px;width:36.3px">31</div>
<div class="td tl" style="left:367.3px;top:874.60px;width:133.2px">Nguyễn Thị Minh Loan</div>
<div class="td tr" style="left:576.6px;top:874.60px;width:46.7px">4,89</div>
<div class="td tr" style="left:763.1px;top:874.60px;width:46.7px">30,00</div>
<div class="td tr" style="left:903.6px;top:874.60px;width:46.7px">35%</div>
<div class="td tr" style="left:950.3px;top:874.60px;width:46.7px">1,7115</div>
<div class="td tr" style="left:997.0px;top:874.60px;width:46.5px">36,6015</div>
<div class="td tr" style="left:1043.5px;top:874.60px;width:70.7px">30.896.000</div>
<div class="td tr" style="left:1114.2px;top:874.60px;width:46.8px">22</div>
<div class="td tr" style="left:1161.0px;top:874.60px;width:70.5px">4.004.000</div>
<div class="td tr" style="left:1231.5px;top:874.60px;width:70.7px">1.830.000</div>
<div class="td tr" style="left:1302.2px;top:874.60px;width:70.8px">686.000</div>
<div class="td tr" style="left:1373.0px;top:874.60px;width:70.6px">344.000</div>
<div class="td tr" style="left:1443.6px;top:874.60px;width:71.1px">228.000</div>
<div class="td tr" style="left:1514.7px;top:874.60px;width:70.6px">228.000</div>
<div class="td tr" style="left:1585.3px;top:874.60px;width:70.7px">458.000</div>
<div class="td tr" style="left:1727.0px;top:874.60px;width:70.6px">29.374.000</div>
<div class="td tc" style="left:331.0px;top:892.56px;width:36.3px">32</div>
<div class="td tl" style="left:367.3px;top:892.56px;width:133.2px">Trương Thị Thủy</div>
<div class="td tr" style="left:576.6px;top:892.56px;width:46.7px">4,89</div>
<div class="td tr" style="left:623.3px;top:892.56px;width:46.9px">0,20</div>
<div class="td tr" style="left:763.1px;top:892.56px;width:46.7px">28,00</div>
<div class="td tr" style="left:903.6px;top:892.56px;width:46.7px">35%</div>
<div class="td tr" style="left:950.3px;top:892.56px;width:46.7px">1,7815</div>
<div class="td tr" style="left:997.0px;top:892.56px;width:46.5px">34,8715</div>
<div class="td tr" style="left:1043.5px;top:892.56px;width:70.7px">32.160.000</div>
<div class="td tr" style="left:1114.2px;top:892.56px;width:46.8px">22</div>
<div class="td tr" style="left:1161.0px;top:892.56px;width:70.5px">4.170.000</div>
<div class="td tr" style="left:1231.5px;top:892.56px;width:70.7px">1.905.000</div>
<div class="td tr" style="left:1302.2px;top:892.56px;width:70.8px">714.000</div>
<div class="td tr" style="left:1373.0px;top:892.56px;width:70.6px">358.000</div>
<div class="td tr" style="left:1443.6px;top:892.56px;width:71.1px">238.000</div>
<div class="td tr" style="left:1514.7px;top:892.56px;width:70.6px">238.000</div>
<div class="td tr" style="left:1585.3px;top:892.56px;width:70.7px">476.000</div>
<div class="td tr" style="left:1727.0px;top:892.56px;width:70.6px">30.539.000</div>
<div class="td tc" style="left:331.0px;top:910.52px;width:36.3px">33</div>
<div class="td tl" style="left:367.3px;top:910.52px;width:133.2px">Hoàng Thị Nguyệt</div>
<div class="td tr" style="left:576.6px;top:910.52px;width:46.7px">4,89</div>
<div class="td tr" style="left:763.1px;top:910.52px;width:46.7px">27,00</div>
<div class="td tr" style="left:903.6px;top:910.52px;width:46.7px">35%</div>
<div class="td tr" style="left:950.3px;top:910.52px;width:46.7px">1,7115</div>
<div class="td tr" style="left:997.0px;top:910.52px;width:46.5px">33,6015</div>
<div class="td tr" style="left:1043.5px;top:910.52px;width:70.7px">30.896.000</div>
<div class="td tr" style="left:1114.2px;top:910.52px;width:46.8px">22</div>
<div class="td tr" style="left:1161.0px;top:910.52px;width:70.5px">4.004.000</div>
<div class="td tr" style="left:1231.5px;top:910.52px;width:70.7px">1.830.000</div>
<div class="td tr" style="left:1302.2px;top:910.52px;width:70.8px">686.000</div>
<div class="td tr" style="left:1373.0px;top:910.52px;width:70.6px">344.000</div>
<div class="td tr" style="left:1443.6px;top:910.52px;width:71.1px">228.000</div>
<div class="td tr" style="left:1514.7px;top:910.52px;width:70.6px">228.000</div>
<div class="td tr" style="left:1585.3px;top:910.52px;width:70.7px">458.000</div>
<div class="td tr" style="left:1727.0px;top:910.52px;width:70.6px">29.374.000</div>
<div class="td tc" style="left:331.0px;top:928.48px;width:36.3px">34</div>
<div class="td tl" style="left:367.3px;top:928.48px;width:133.2px">Nguyễn Thị Dinh</div>
<div class="td tr" style="left:576.6px;top:928.48px;width:46.7px">4,89</div>
<div class="td tr" style="left:763.1px;top:928.48px;width:46.7px">27,00</div>
<div class="td tr" style="left:903.6px;top:928.48px;width:46.7px">35%</div>
<div class="td tr" style="left:950.3px;top:928.48px;width:46.7px">1,7115</div>
<div class="td tr" style="left:997.0px;top:928.48px;width:46.5px">33,6015</div>
<div class="td tr" style="left:1043.5px;top:928.48px;width:70.7px">30.896.000</div>
<div class="td tr" style="left:1114.2px;top:928.48px;width:46.8px">22</div>
<div class="td tr" style="left:1161.0px;top:928.48px;width:70.5px">4.004.000</div>
<div class="td tr" style="left:1231.5px;top:928.48px;width:70.7px">1.830.000</div>
<div class="td tr" style="left:1302.2px;top:928.48px;width:70.8px">686.000</div>
<div class="td tr" style="left:1373.0px;top:928.48px;width:70.6px">344.000</div>
<div class="td tr" style="left:1443.6px;top:928.48px;width:71.1px">228.000</div>
<div class="td tr" style="left:1514.7px;top:928.48px;width:70.6px">228.000</div>
<div class="td tr" style="left:1585.3px;top:928.48px;width:70.7px">458.000</div>
<div class="td tr" style="left:1727.0px;top:928.48px;width:70.6px">29.374.000</div>
<div class="td tc" style="left:331.0px;top:946.44px;width:36.3px">35</div>
<div class="td tl" style="left:367.3px;top:946.44px;width:133.2px">Nguyễn Thị Tuyết</div>
<div class="td tr" style="left:576.6px;top:946.44px;width:46.7px">4,89</div>
<div class="td tr" style="left:763.1px;top:946.44px;width:46.7px">27,00</div>
<div class="td tr" style="left:903.6px;top:946.44px;width:46.7px">35%</div>
<div class="td tr" style="left:950.3px;top:946.44px;width:46.7px">1,7115</div>
<div class="td tr" style="left:997.0px;top:946.44px;width:46.5px">33,6015</div>
<div class="td tr" style="left:1043.5px;top:946.44px;width:70.7px">30.896.000</div>
<div class="td tr" style="left:1114.2px;top:946.44px;width:46.8px">22</div>
<div class="td tr" style="left:1161.0px;top:946.44px;width:70.5px">4.004.000</div>
<div class="td tr" style="left:1231.5px;top:946.44px;width:70.7px">1.830.000</div>
<div class="td tr" style="left:1302.2px;top:946.44px;width:70.8px">686.000</div>
<div class="td tr" style="left:1373.0px;top:946.44px;width:70.6px">344.000</div>
<div class="td tr" style="left:1443.6px;top:946.44px;width:71.1px">228.000</div>
<div class="td tr" style="left:1514.7px;top:946.44px;width:70.6px">228.000</div>
<div class="td tr" style="left:1585.3px;top:946.44px;width:70.7px">458.000</div>
<div class="td tr" style="left:1727.0px;top:946.44px;width:70.6px">29.374.000</div>
<div class="ptxt" style="left:333.0px;top:129.0px;font-size:11px;line-height:12.65px;font-weight:normal;font-style:normal">Phòng Giáo dục và Đào tạo huyện MISA</div>
<div class="ptxt" style="left:333.0px;top:147.3px;font-size:11.1px;line-height:12.76px;font-weight:bold;font-style:normal">Trường Tiểu học MISA</div>
<div class="ptxt" style="right:29.0px;top:126.7px;font-size:11.25px;line-height:12.94px;font-weight:bold;font-style:normal">Mẫu số C02- HD</div>
<div class="ptxt" style="left:501.7px;width:1200px;text-align:center;top:180.2px;font-size:12.72px;line-height:14.63px;font-weight:bold;font-style:normal">BẢNG THANH TOÁN TIỀN LƯƠNG VÀ CÁC KHOẢN PHỤ CẤP THEO LƯƠNG, CÁC KHOẢN TRÍCH NỘP THEO LƯƠNG</div>
<div class="ptxt" style="left:502.5px;width:1200px;text-align:center;top:199.0px;font-size:11.18px;line-height:12.86px;font-weight:normal;font-style:italic">Tháng 09 năm 2024</div>
</div></div>
</body></html>
